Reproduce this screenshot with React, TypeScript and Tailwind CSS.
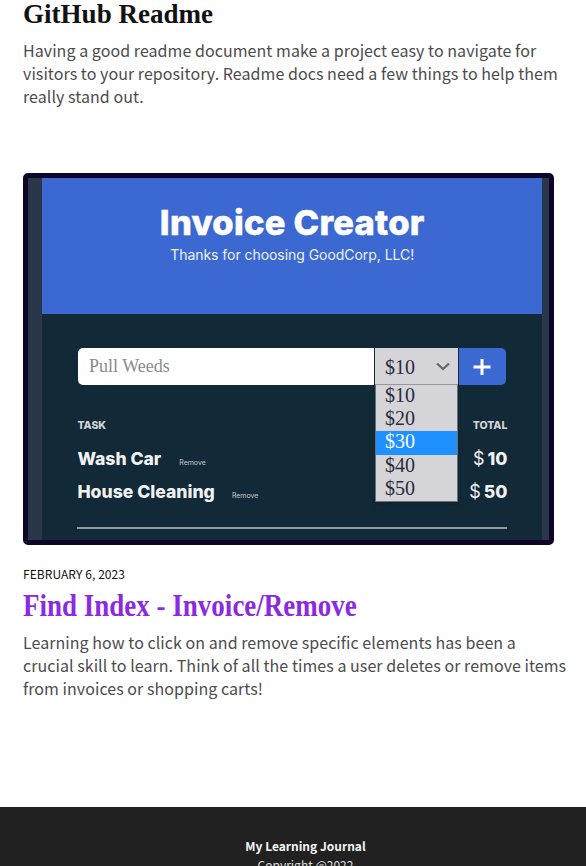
import type { ReactNode } from "react";

const sans = "font-['Noto_Sans_CJK_SC',sans-serif]";
const serif = "font-['Liberation_Serif',serif]";
const inter = "font-['Inter',sans-serif]";

function Line({ className, children }: { className: string; children: ReactNode }) {
  return <span className={`block w-max whitespace-nowrap ${className}`}>{children}</span>;
}

const prices = ["$10", "$20", "$30", "$40", "$50"];

function InvoicePreview() {
  return (
    <div className="flex h-[372px] w-[531px] overflow-hidden rounded-[5px] border-5 border-[#0d0628] bg-[#2a364a] pr-[7px] pl-[14.4px]">
      <div className={`flex flex-1 flex-col bg-[#122937] text-white ${inter}`}>
        <div className="flex h-[136px] flex-col items-center bg-[#3c69d1] pt-[25px]">
          <Line className="text-[34.5px] leading-[40px] font-extrabold tracking-[0.25px] [-webkit-text-stroke:0.5px_white]">Invoice Creator</Line>
          <Line className="mt-[3px] text-[14px] leading-[18px] tracking-[-0.05px] text-[#eef1fb]">Thanks for choosing GoodCorp, LLC!</Line>
        </div>
        <div className="mt-[34px] ml-[35.6px] flex h-[37px] w-[428px] gap-px">
          <div className={`flex w-[296px] items-center rounded-l-[5px] bg-white pl-[11px] text-[18px] text-[#8b8b8b] ${serif}`}>
            Pull Weeds
          </div>
          <div className={`relative flex w-[83px] items-center justify-between bg-[#d5d4d9] pr-2 pl-[10px] text-[20px] text-[#2b2b3b] ${serif}`}>
            $10
            <svg width="14" height="9" viewBox="0 0 14 9" fill="none" stroke="#68686c" strokeWidth="2.3">
              <path d="M1 1.5 7 7 13 1.5" />
            </svg>
            <div className="absolute top-[36px] left-0 w-[83px] border border-t-[#98979d] border-[#6d7177] bg-[#d5d4d9] shadow-md">
              {prices.map((price) => (
                <div
                  key={price}
                  className={`h-[23.2px] pl-[9px] text-[20px] leading-[20px] ${price === "$30" ? "bg-[#1e90ff] text-white" : ""}`}
                >
                  {price}
                </div>
              ))}
            </div>
          </div>
          <div className="flex w-[47px] items-center justify-center rounded-r-[5px] bg-[#3c69d1]">
            <svg width="18" height="18" viewBox="0 0 18 18" stroke="white" strokeWidth="3">
              <path d="M9 1V17M0.5 9H17.5" />
            </svg>
          </div>
        </div>
        <div className="mt-[33px] ml-[35px] flex h-4 w-[430px] items-center justify-between text-[10.5px] font-extrabold text-[#d5d4d8]">
          <Line className="">TASK</Line>
          <Line className="">TOTAL</Line>
        </div>
        <div className="mt-[8px] ml-[35px] flex h-[33px] w-[430px] items-baseline text-[17.6px] leading-[33px] font-extrabold text-[#f1f1f3]">
          <Line className="">Wash Car</Line>
          <Line className="ml-[18px] text-[7px] font-normal text-[#c8cdd1]">Remove</Line>
          <Line className="ml-auto"><span className="mr-[3px] text-[18px] font-normal">$</span>10</Line>
        </div>
        <div className="ml-[35px] flex h-[33px] w-[430px] items-baseline text-[17.6px] leading-[33px] font-extrabold text-[#f1f1f3]">
          <Line className="">House Cleaning</Line>
          <Line className="ml-[17px] text-[7px] font-normal text-[#c8cdd1]">Remove</Line>
          <Line className="ml-auto"><span className="mr-[3px] text-[18px] font-normal">$</span>50</Line>
        </div>
        <div className="mt-[19px] ml-[35px] h-[2px] w-[429.5px] bg-[#98999f]" />
      </div>
    </div>
  );
}

export default function App() {
  return (
    <div className={`flex h-[866px] w-[586px] flex-col overflow-hidden bg-white ${sans}`}>
      <article className="h-[173px] pl-[23px]">
        <h2 className={`h-[39px] text-[28px] leading-[27px] font-bold text-[#111] ${serif}`}>
          <Line className="origin-left scale-x-[0.966]">GitHub Readme</Line>
        </h2>
        <p className="text-[16px] leading-[23px] tracking-[0.055px] text-[#4c4c4c]">
          <Line className="">Having a good readme document make a project easy to navigate for</Line>
          <Line className="">visitors to your repository. Readme docs need a few things to help them</Line>
          <Line className="">really stand out.</Line>
        </p>
      </article>
      <article className="h-[634px] pl-[23px]">
        <InvoicePreview />
        <time className="mt-[19px] block h-[20px] text-[12px] leading-[20px] tracking-[0.07px] text-[#111]">FEBRUARY 6, 2023</time>
        <h2 className={`mt-[4px] h-[43px] text-[32px] leading-[34px] font-bold text-[#8a2be2] ${serif}`}>
          <Line className="origin-left scale-x-[0.844]">Find Index - Invoice/Remove</Line>
        </h2>
        <p className="text-[16px] leading-[23px] tracking-[0.055px] text-[#4c4c4c]">
          <Line className="">Learning how to click on and remove specific elements has been a</Line>
          <Line className="">crucial skill to learn. Think of all the times a user deletes or remove items</Line>
          <Line className="">from invoices or shopping carts!</Line>
        </p>
      </article>
      <footer className="flex h-[59px] flex-col items-center overflow-hidden bg-[#212121] pt-[29px] pl-[25px] text-[12px] leading-[19px] text-[#dedede]">
        <Line className="font-bold text-[#f4f4f4]">My Learning Journal</Line>
        <Line className="">Copyright @2022</Line>
      </footer>
    </div>
  );
}
